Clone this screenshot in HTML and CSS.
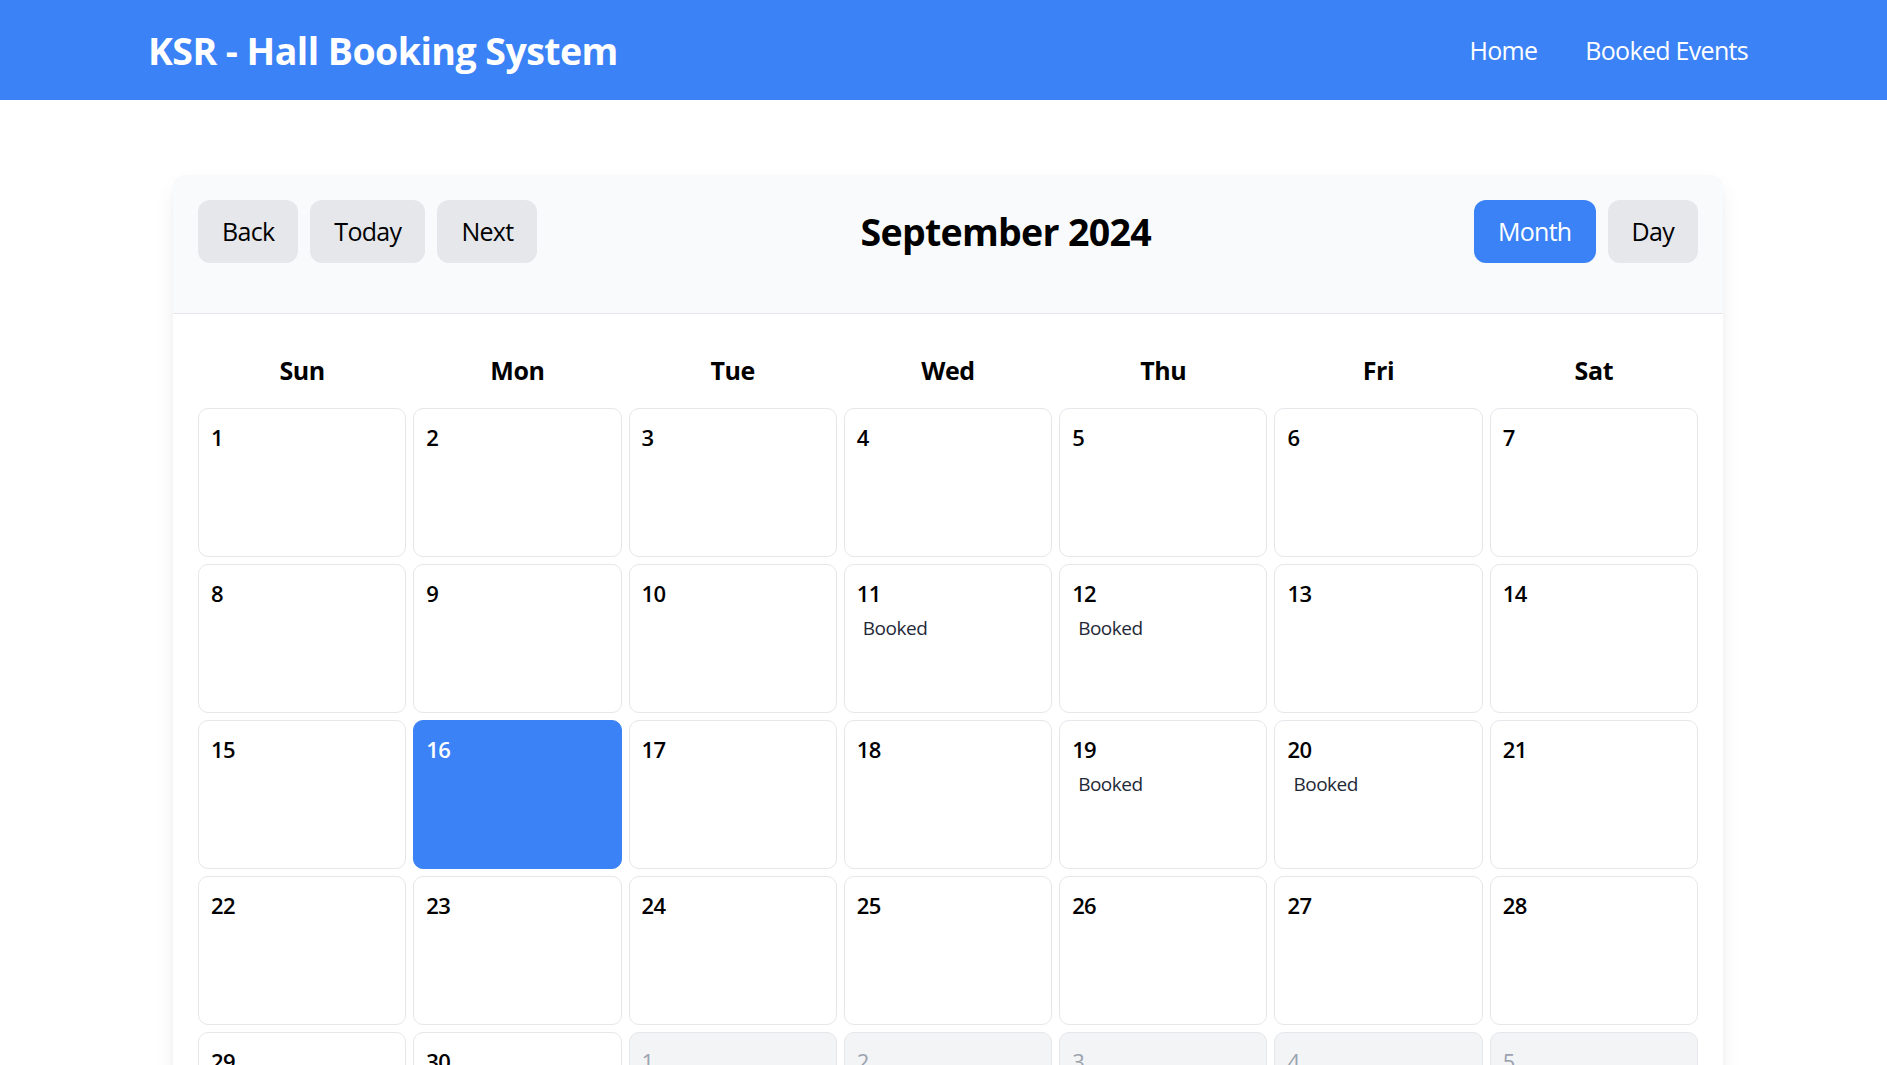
FILE: index.html
```html
<!DOCTYPE html>
<html lang="en">
<head>
<meta charset="utf-8">
<title>KSR - Hall Booking System</title>
<link rel="stylesheet" href="styles.css">
</head>
<body>
<header class="topbar">
  <div class="topbar-inner">
    <h1 class="brand">KSR - Hall Booking System</h1>
    <nav class="nav">
      <a class="nav-link" href="#">Home</a>
      <a class="nav-link" href="#">Booked Events</a>
    </nav>
  </div>
</header>
<main class="page">
  <section class="calendar">
    <div class="toolbar">
      <div class="btn-group">
        <button class="btn">Back</button>
        <button class="btn">Today</button>
        <button class="btn">Next</button>
      </div>
      <h2 class="month-title">September 2024</h2>
      <div class="btn-group">
        <button class="btn btn-active">Month</button>
        <button class="btn">Day</button>
      </div>
    </div>
    <div class="cal-body">
      <div class="weekdays">
        <div class="weekday">Sun</div>
        <div class="weekday">Mon</div>
        <div class="weekday">Tue</div>
        <div class="weekday">Wed</div>
        <div class="weekday">Thu</div>
        <div class="weekday">Fri</div>
        <div class="weekday">Sat</div>
      </div>
      <div class="grid">
        <div class="cell"><span class="num">1</span></div>
        <div class="cell"><span class="num">2</span></div>
        <div class="cell"><span class="num">3</span></div>
        <div class="cell"><span class="num">4</span></div>
        <div class="cell"><span class="num">5</span></div>
        <div class="cell"><span class="num">6</span></div>
        <div class="cell"><span class="num">7</span></div>

        <div class="cell"><span class="num">8</span></div>
        <div class="cell"><span class="num">9</span></div>
        <div class="cell"><span class="num">10</span></div>
        <div class="cell"><span class="num">11</span><div class="event">Booked</div></div>
        <div class="cell"><span class="num">12</span><div class="event">Booked</div></div>
        <div class="cell"><span class="num">13</span></div>
        <div class="cell"><span class="num">14</span></div>

        <div class="cell"><span class="num">15</span></div>
        <div class="cell cell-today"><span class="num">16</span></div>
        <div class="cell"><span class="num">17</span></div>
        <div class="cell"><span class="num">18</span></div>
        <div class="cell"><span class="num">19</span><div class="event">Booked</div></div>
        <div class="cell"><span class="num">20</span><div class="event">Booked</div></div>
        <div class="cell"><span class="num">21</span></div>

        <div class="cell"><span class="num">22</span></div>
        <div class="cell"><span class="num">23</span></div>
        <div class="cell"><span class="num">24</span></div>
        <div class="cell"><span class="num">25</span></div>
        <div class="cell"><span class="num">26</span></div>
        <div class="cell"><span class="num">27</span></div>
        <div class="cell"><span class="num">28</span></div>

        <div class="cell"><span class="num">29</span></div>
        <div class="cell"><span class="num">30</span></div>
        <div class="cell cell-off"><span class="num">1</span></div>
        <div class="cell cell-off"><span class="num">2</span></div>
        <div class="cell cell-off"><span class="num">3</span></div>
        <div class="cell cell-off"><span class="num">4</span></div>
        <div class="cell cell-off"><span class="num">5</span></div>
      </div>
    </div>
  </section>
</main>
</body>
</html>
```
FILE: styles.css
```css
* { box-sizing: border-box; }
html, body { margin: 0; padding: 0; }
body {
  font-family: "Open Sans", "Noto Sans", "Liberation Sans", sans-serif;
  background: #ffffff;
  color: #000;
}

.topbar {
  background: #3b82f6;
  height: 100px;
  display: flex;
  justify-content: center;
  padding-left: 9px;
}
.topbar-inner {
  width: 1600px;
  display: flex;
  align-items: center;
  justify-content: space-between;
}
.brand {
  margin: 0;
  color: #fff;
  font-size: 37.5px;
  font-weight: 700;
  line-height: 56px;
  letter-spacing: -0.55px;
  margin-top: 2px;
}
.nav {
  display: flex;
  gap: 48px;
  margin-top: 1px;
}
.nav-link {
  color: #fff;
  text-decoration: none;
  font-size: 25px;
  line-height: 37.5px;
  letter-spacing: -0.7px;
}

.page {
  display: flex;
  justify-content: center;
  padding-left: 9px;
  padding-top: 75px;
}
.calendar {
  width: 1550px;
  background: #fff;
  border-radius: 12px;
  box-shadow: 0 10px 25px -5px rgba(0,0,0,0.10), 0 6px 12px -6px rgba(0,0,0,0.08);
  overflow: hidden;
}
.toolbar {
  background: #f9fafb;
  border-bottom: 1px solid #e5e7eb;
  padding: 25px 25px 50px;
  display: flex;
  align-items: center;
  justify-content: space-between;
}
.btn-group {
  display: flex;
  gap: 12px;
}
.btn {
  font-family: inherit;
  font-size: 25px;
  line-height: 37.5px;
  letter-spacing: -0.7px;
  height: 63px;
  padding: 0 24px;
  border: none;
  border-radius: 12px;
  background: #e5e7eb;
  color: #000;
}
.btn-active {
  background: #3b82f6;
  color: #fff;
}
.month-title {
  margin: 0;
  font-size: 37.5px;
  font-weight: 700;
  line-height: 56px;
  letter-spacing: -0.7px;
  color: #000;
}

.cal-body {
  padding: 38px 25px 25px;
}
.weekdays {
  display: grid;
  grid-template-columns: repeat(7, 1fr);
  gap: 7px;
  margin-bottom: 18px;
}
.weekday {
  text-align: center;
  font-size: 25px;
  font-weight: 700;
  line-height: 37.5px;
  letter-spacing: -0.4px;
}
.grid {
  display: grid;
  grid-template-columns: repeat(7, 1fr);
  gap: 7px;
}
.cell {
  height: 149px;
  border: 1px solid #e5e7eb;
  border-radius: 10px;
  background: #fff;
  padding: 11px 12px;
}
.num {
  display: block;
  font-size: 22px;
  font-weight: 600;
  line-height: 34px;
  letter-spacing: -0.6px;
}
.event {
  margin-top: 3px;
  padding: 0 6px;
  font-size: 19px;
  line-height: 30px;
  letter-spacing: -0.5px;
  color: #1f2937;
}
.cell-today {
  background: #3b82f6;
  border-color: #3b82f6;
  color: #fff;
}
.cell-off {
  background: #f3f4f6;
  color: #9ca3af;
}
.cell-off .num {
  font-weight: 400;
}
```
